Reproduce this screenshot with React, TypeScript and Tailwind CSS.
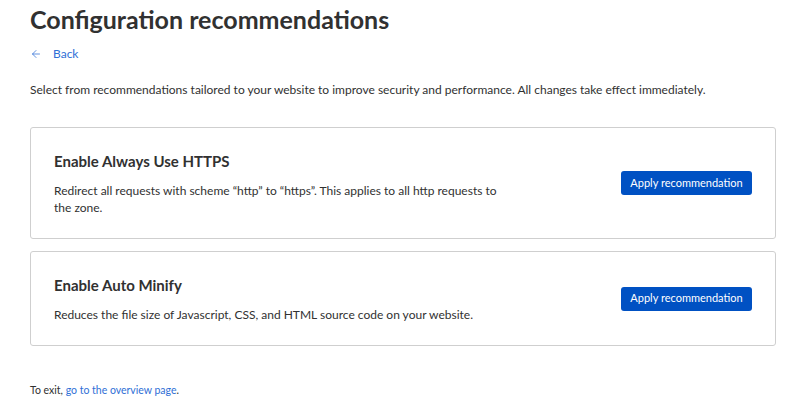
import { ArrowLeft } from 'lucide-react'

const recs = [
  {
    title: 'Enable Always Use HTTPS',
    text: 'Redirect all requests with scheme “http” to “https”. This applies to all http requests to the zone.',
  },
  {
    title: 'Enable Auto Minify',
    text: 'Reduces the file size of Javascript, CSS, and HTML source code on your website.',
  },
]

export default function App() {
  return (
    <div className="min-h-[414px] bg-white px-[30px] pt-[3px] text-[#313131] font-['Lato',sans-serif]">
      <h1 className="text-[25px] font-bold leading-[32px]">Configuration recommendations</h1>

      {/* Back link */}
      <a href="#" className="mt-[10px] flex items-center gap-[11px] text-[12px] leading-[18px] text-[#2f6fd6]">
        <ArrowLeft size={12} strokeWidth={1.5} />
        Back
      </a>

      <p className="mt-[18px] text-[12px] leading-[18px]">
        Select from recommendations tailored to your website to improve security and performance. All changes take effect immediately.
      </p>

      <div className="mt-[28px] flex w-[746px] flex-col gap-[12px]">
        {recs.map((r) => (
          <div
            key={r.title}
            className="flex items-center justify-between rounded-[3px] border border-[#cfcfcf] py-[22px] pl-[23px] pr-[23px]"
          >
            <div className="max-w-[455px]">
              <h2 className="mb-[10px] text-[15px] font-bold leading-[22px]">{r.title}</h2>
              <p className="text-[12px] leading-[17px]">{r.text}</p>
            </div>
            <button className="h-[24px] w-[131px] shrink-0 whitespace-nowrap rounded-[3px] bg-[#0051c3] text-[11px] text-white">
              Apply recommendation
            </button>
          </div>
        ))}
      </div>

      <p className="mt-[36px] text-[10.5px] leading-[16px]">
        To exit, <a href="#" className="text-[#2f6fd6]">go to the overview page</a>.
      </p>
    </div>
  )
}
